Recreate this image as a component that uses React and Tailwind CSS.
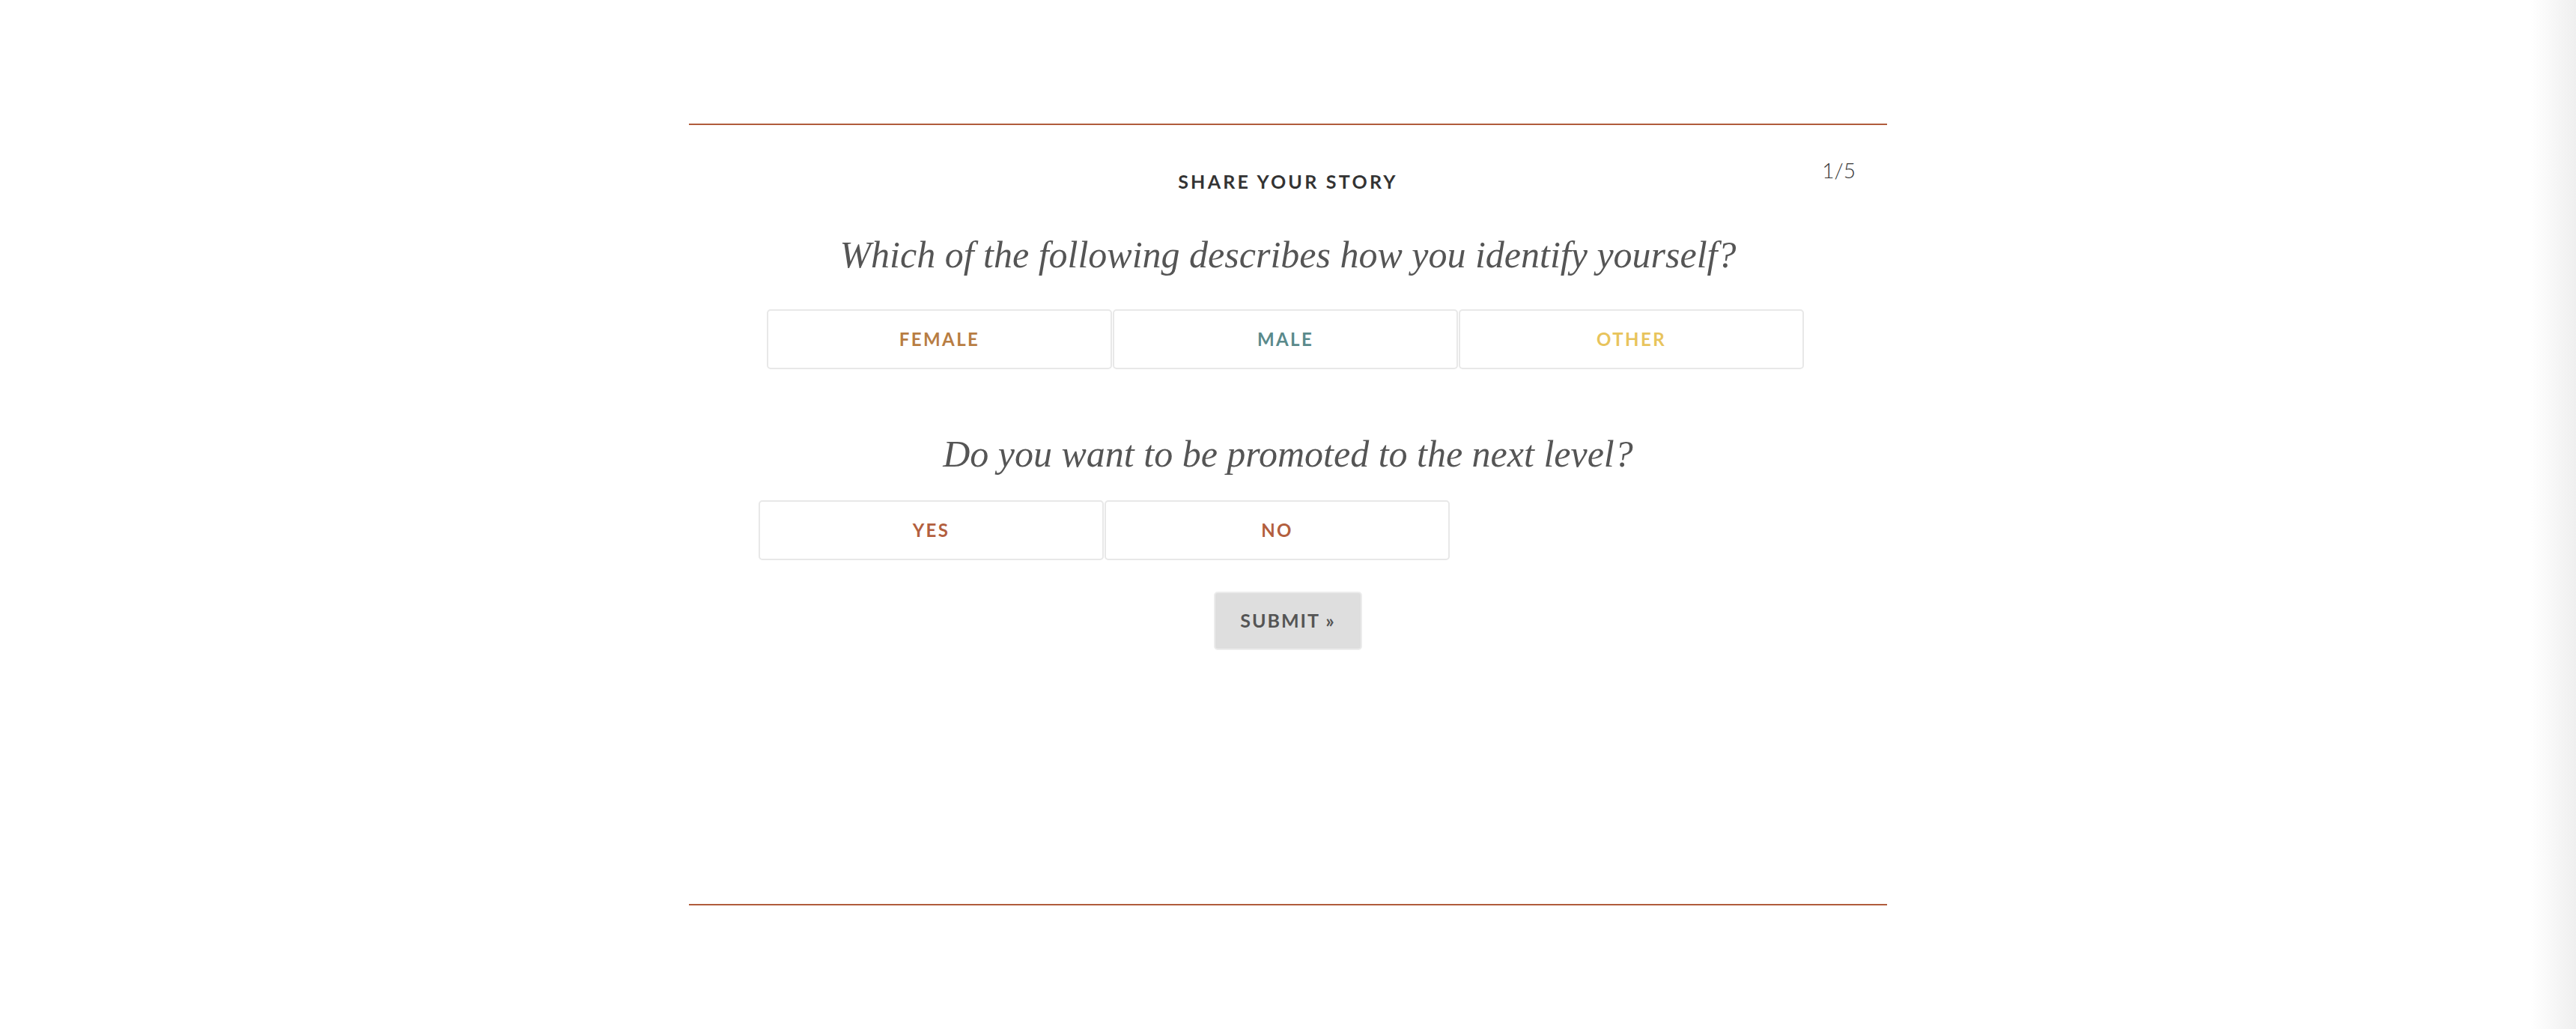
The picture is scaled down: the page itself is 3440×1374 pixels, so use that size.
import React from "react";

const serif = { fontFamily: '"Liberation Serif", "DejaVu Serif", serif' };

const ChoiceButton = ({ label, color }) => (
  <button
    type="button"
    className={`w-[461px] h-[80px] border-2 border-[#e8e8e8] rounded-[5px] bg-white flex items-center justify-center font-bold text-[24px] tracking-[0.1em] ${color}`}
  >
    {label}
  </button>
);

export default function App() {
  return (
    <div
      className="relative w-full h-[1374px] bg-white overflow-hidden"
      style={{ fontFamily: 'Lato, "Open Sans", sans-serif' }}
    >
      {/* right edge shade */}
      <div className="absolute right-0 top-0 h-full w-[60px] bg-gradient-to-r from-white to-[#efefef]" />

      <div className="pt-[165px]">
        <section className="relative w-[1600px] mx-auto">
          <div className="h-[2px] bg-[#b05c3b]" />

          <span className="absolute right-[42px] top-[48px] text-[28px] leading-[28px] font-light text-[#333]">
            1/5
          </span>

          <h2 className="mt-[60px] text-center text-[25px] leading-[30px] font-bold tracking-[0.13em] text-[#333]">
            SHARE YOUR STORY
          </h2>

          <h1
            className="mt-[51px] text-center italic text-[50px] leading-[64px] text-[#555]"
            style={serif}
          >
            Which of the following describes how you identify yourself?
          </h1>

          <div className="mt-[41px] ml-[104px] flex gap-[1px]">
            <ChoiceButton label="FEMALE" color="text-[#b87d42]" />
            <ChoiceButton label="MALE" color="text-[#5a8a8b]" />
            <ChoiceButton label="OTHER" color="text-[#e8c45c]" />
          </div>

          <h1
            className="mt-[81px] text-center italic text-[50px] leading-[64px] text-[#555]"
            style={serif}
          >
            Do you want to be promoted to the next level?
          </h1>

          <div className="mt-[30px] ml-[93px] flex gap-[1px]">
            <ChoiceButton label="YES" color="text-[#b35f3e]" />
            <ChoiceButton label="NO" color="text-[#b35f3e]" />
          </div>

          <div className="mt-[42px] flex justify-center">
            <button
              type="button"
              className="w-[198px] h-[78px] bg-[#dedede] border-2 border-[#ececec] rounded-[5px] text-[25px] font-bold tracking-[0.08em] text-[#555]"
            >
              SUBMIT »
            </button>
          </div>

          <div className="mt-[339px] h-[2px] bg-[#b05c3b]" />
        </section>
      </div>
    </div>
  );
}
